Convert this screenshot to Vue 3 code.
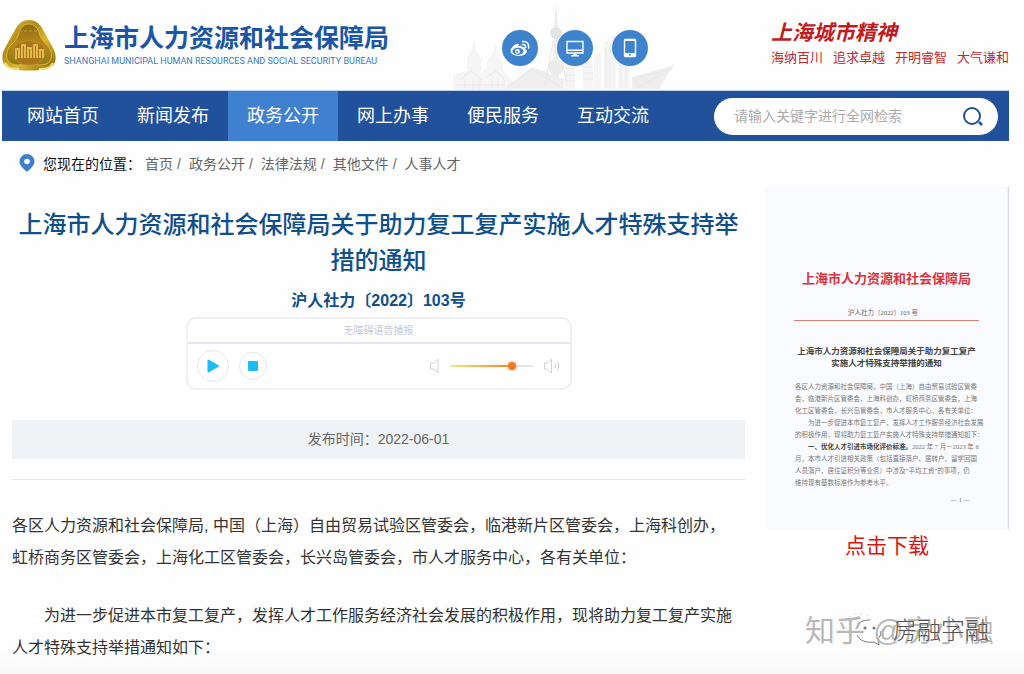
<script setup>
import { ref } from 'vue'

const navItems = ['网站首页', '新闻发布', '政务公开', '网上办事', '便民服务', '互动交流']
const active = ref('政务公开')
const crumbs = ['首页', '政务公开', '法律法规', '其他文件', '人事人才']
const slogans = ['海纳百川', '追求卓越', '开明睿智', '大气谦和']
const keyword = ref('')
const volume = ref(78)

const scanLines = [
  { x: 60, text: '各区人力资源和社会保障局，中国（上海）自由贸易试验区管委' },
  { x: 60, text: '会，临港新片区管委会，上海科创办，虹桥商务区管委会，上海' },
  { x: 60, text: '化工区管委会，长兴岛管委会，市人才服务中心，各有关单位：' },
  { x: 86, text: '为进一步促进本市复工复产，发挥人才工作服务经济社会发展' },
  { x: 60, text: '的积极作用，现将助力复工复产实施人才特殊支持举措通知如下：' },
  { x: 86, bold: '一、优化人才引进市场化评价标准。', text: '2022 年 7 月－2023 年 6' },
  { x: 60, text: '月，本市人才引进相关政策（包括直接落户、居转户、留学回国' },
  { x: 60, text: '人员落户、居住证积分等业务）中涉及“平均工资”的事项，仍' },
  { x: 60, text: '维持现有基数标准作为参考水平。' },
]
</script>

<template>
  <div class="page">
    <header class="header">
      <a class="brand" href="#">
        <svg class="emblem" viewBox="0 0 54 52" aria-hidden="true">
          <defs>
            <linearGradient id="gold" x1="0" y1="0" x2="1" y2="1">
              <stop offset="0" stop-color="#e3c343" />
              <stop offset=".35" stop-color="#b08a16" />
              <stop offset=".6" stop-color="#dcb830" />
              <stop offset="1" stop-color="#8a6105" />
            </linearGradient>
            <linearGradient id="goldIn" x1="0" y1="0" x2="0" y2="1">
              <stop offset="0" stop-color="#8d6a10" />
              <stop offset=".5" stop-color="#b8891c" />
              <stop offset="1" stop-color="#8a7a14" />
            </linearGradient>
          </defs>
          <path d="M27 1c6 0 10 3 13 8l11 20c5 10 3 19-7 21-10 2-24 2-34 0C0 48-2 39 3 29L14 9c3-5 7-8 13-8z" fill="url(#gold)" />
          <path d="M27 5c5 0 8 3 10 8 1 6 4 9 9 14 5 6 5 15-2 18-6 2-11 0-17 0s-11 2-17 0c-7-3-7-12-2-18 5-5 8-8 9-14 2-5 5-8 10-8z" fill="url(#goldIn)" stroke="#d9b93c" stroke-width="1" />
          <path d="M12 28c4-8 26-8 30 0 3 8-1 18-15 18S9 36 12 28z" fill="#a9761a" stroke="#b98f28" />
          <path d="M14 40V30h3v9M20 39V26h3v13M26 39V29h3v10M32 39V26h3v13M38 39V31h3v8" fill="none" stroke="#dfb94c" stroke-width="2" />
          <path d="M17 12h20" stroke="#b18b24" stroke-width="2" stroke-dasharray="3 2" />
          <path d="M3 44c3 6 8 6 14 6M51 44c-3 6-8 6-14 6" fill="none" stroke="#f2e07c" stroke-width="2" />
        </svg>
        <span class="brand-text">
          <strong>上海市人力资源和社会保障局</strong>
          <small>SHANGHAI MUNICIPAL HUMAN RESOURCES AND SOCIAL SECURITY BUREAU</small>
        </span>
      </a>

      <div class="channels">
        <svg class="skyline" viewBox="0 0 230 88" aria-hidden="true">
          <g fill="#f5f5f6">
            <path d="M0 88V74l14-4V57l5-8 2-10 2 10 5 9v14l6-4V60l6-7 2-12 2 12 6 9v8l10 10v18z" />
            <path d="M51 88l28-22 32 12v10z" fill="#efeff0" />
            <path d="M101 30l1-15 1-14 1 14 1 15 1 48h-6z" fill="#ededee" />
            <path d="M112 88V56h10v32zM130 88V60h10v28zM141 88V52h7v36z" />
            <path d="M151 88V42l12-8v54zM165 88V52h12v36z" />
            <path d="M179 76l42-12-15 24h-27z" fill="#eeeeef" />
          </g>
          <circle cx="103" cy="32" r="6" fill="#e4e5e7" />
          <circle cx="103" cy="66" r="8" fill="#ececed" />
          <g fill="none" stroke="#e8e9ea" stroke-width="1">
            <path d="M4 84h46M8 78l10-8 10 8v8M34 76l9-6 8 8v8M12 88V78M20 88V78M26 88V78M39 88V78M45 88V78M100 40l-8 46M106 40l8 46" />
            <path d="M54 86l25-18 28 18M112 62h10M112 68h10M112 74h10M112 80h10M130 66h10M130 72h10M130 78h10M153 46v40M157 44v42M168 56v30M173 56v30M181 78l38-10-34 18z" />
          </g>
        </svg>
        <nav class="channel-links" aria-label="官方渠道">
          <a href="#" aria-label="微博">
            <svg viewBox="0 0 36 36">
              <path d="M16 16.200c2-1 4-.7 3.800 1.100 2-.8 4 .1 3.400 2 1.800.5 2.100 2 1.200 3.400-1.400 2.200-4.700 3.200-8 3.200-4.200 0-7.800-2-7.800-4.900 0-3 4.400-7.500 7.300-7.200 1.200.200 1.300 1.200.1 2.400z" fill="#fff" />
              <ellipse cx="16" cy="21.300" rx="5.500" ry="3.600" fill="#3f83cf" />
              <circle cx="15.500" cy="21.500" r="2.400" fill="#fff" />
              <circle cx="15" cy="21.700" r="1" fill="#3f83cf" />
              <path d="M20.500 14.500c2.300-.3 3.500.9 3.100 3M20.600 11.500c4.300-.5 6.700 2.300 6 6.400" fill="none" stroke="#fff" stroke-width="1.500" stroke-linecap="round" />
            </svg>
          </a>
          <a href="#" aria-label="电脑版">
            <svg viewBox="0 0 36 36">
              <path d="M10 11.500h16v11.500H10z" fill="none" stroke="#fff" stroke-width="1.400" />
              <path d="M10 19.500h16v1.500H10zM16.500 23.500h3v2h-3zM14 25h8v1.500h-8z" fill="#fff" />
            </svg>
          </a>
          <a href="#" aria-label="手机版">
            <svg viewBox="0 0 36 36">
              <rect x="12.500" y="9.500" width="11" height="17" rx="1" fill="none" stroke="#fff" stroke-width="1.400" />
              <path d="M12.500 23h11v3.500h-11zM12.500 9.500h11V11h-11z" fill="#fff" />
              <circle cx="18" cy="24.800" r="1" fill="#3f83cf" />
            </svg>
          </a>
        </nav>
      </div>

      <div class="spirit">
        <strong>上海城市精神</strong>
        <p><span v-for="s in slogans" :key="s">{{ s }}</span></p>
      </div>
    </header>

    <div class="navbar">
      <nav class="menu">
        <a v-for="item in navItems" :key="item" href="#" :class="{ active: item === active }" @click.prevent="active = item">{{ item }}</a>
      </nav>
      <form class="search" @submit.prevent>
        <input v-model="keyword" type="text" placeholder="请输入关键字进行全网检索" aria-label="请输入关键字进行全网检索" />
        <button type="submit" aria-label="检索">
          <svg viewBox="0 0 22 22">
            <circle cx="10" cy="11" r="8" fill="none" stroke="#20519a" stroke-width="2" />
            <path d="M17 17l3 3" stroke="#20519a" stroke-width="2.500" />
          </svg>
        </button>
      </form>
    </div>

    <nav class="crumbs" aria-label="您现在的位置">
      <svg class="pin" viewBox="0 0 16 18" aria-hidden="true">
        <path d="M8 0a7.500 7.500 0 0 1 7.500 7.500C15.500 11.500 11 15 8 18 5 15 .5 11.500.5 7.500A7.500 7.500 0 0 1 8 0z" fill="#3f80cd" />
        <circle cx="8" cy="7.500" r="2.800" fill="#fff" />
      </svg>
      <b>您现在的位置：</b>
      <span v-for="(c, i) in crumbs" :key="c" class="crumb"><a href="#">{{ c }}</a><i v-if="i < crumbs.length - 1">/</i></span>
    </nav>

    <div class="content">
      <main class="article">
        <h1>上海市人力资源和社会保障局关于助力复工复产实施人才特殊支持举措的通知</h1>
        <h2>沪人社力〔2022〕103号</h2>

        <section class="player" aria-label="无障碍语音播报">
          <div class="player-title">无障碍语音播报</div>
          <div class="controls">
            <button class="play" type="button" aria-label="播放">
              <svg viewBox="0 0 12 14"><path d="M1.500 1.500v11L11 7z" fill="#1dbcf8" stroke="#1dbcf8" stroke-width="2" stroke-linejoin="round" /></svg>
            </button>
            <button class="stop" type="button" aria-label="停止">
              <svg viewBox="0 0 12 12"><rect x="1" y="1" width="10" height="10" rx="1" fill="#1dbcf8" /></svg>
            </button>
            <div class="volume">
              <svg class="low" viewBox="0 0 12 16" aria-hidden="true"><path d="M1.500 5h3.500l4-4v14l-4-4H1.500z" /></svg>
              <input v-model="volume" type="range" min="0" max="100" aria-label="音量" />
              <svg class="high" viewBox="0 0 18 16" aria-hidden="true"><path d="M1.500 5h3l4-4v14l-4-4h-3zM11.500 5.500q2 2.500 0 5M14 3.500q3.500 4.500 0 9" /></svg>
            </div>
          </div>
        </section>

        <div class="published">发布时间：2022-06-01</div>
        <hr />
        <div class="body-text">
          <p>各区人力资源和社会保障局, 中国（上海）自由贸易试验区管委会，临港新片区管委会，上海科创办，<br />虹桥商务区管委会，上海化工区管委会，长兴岛管委会，市人才服务中心，各有关单位：</p>
          <p class="indent">为进一步促进本市复工复产，发挥人才工作服务经济社会发展的积极作用，现将助力复工复产实施人才特殊支持举措通知如下：</p>
        </div>
      </main>

      <aside class="side">
        <svg class="scan" viewBox="0 0 488 684" role="img" aria-label="通知文件首页">
          <rect width="488" height="684" fill="#fafbfe" />
          <path d="M487 0v684" stroke="#d5d9e0" stroke-width="3" />
          <text class="red-head" x="243" y="191" text-anchor="middle">上海市人力资源和社会保障局</text>
          <text class="number" x="236" y="256" text-anchor="middle">沪人社力〔2022〕103 号</text>
          <path d="M58 267h370" stroke="#d98378" stroke-width="2" />
          <text class="subject" x="243" y="334" text-anchor="middle">上海市人力资源和社会保障局关于助力复工复产</text>
          <text class="subject" x="243" y="358" text-anchor="middle">实施人才特殊支持举措的通知</text>
          <text v-for="(line, i) in scanLines" :key="i" class="line" :x="line.x" :y="404 + i * 24"><tspan v-if="line.bold" class="bold">{{ line.bold }}</tspan>{{ line.text }}</text>
          <text class="line" x="371" y="630">— 1 —</text>
        </svg>
        <a class="download" href="#">点击下载</a>
        <div class="marks">
          <svg class="chat" viewBox="0 0 42 36" aria-hidden="true">
            <path d="M4 18C-1 8 10 1 20 3c4 1 7 3 8 6" fill="none" stroke="#e2e2e2" stroke-dasharray="3 3" />
            <path d="M14 15c3-5 8-6 13-6M14 24c3 6 9 8 17 7l5 3-1-6c2-2 3-5 3-8" fill="none" stroke="#777" />
            <circle cx="22" cy="17" r="1.500" fill="#777" /><circle cx="31" cy="17" r="1.500" fill="#777" />
          </svg>
          <span class="zhihu">知乎 @房小融</span>
          <span class="account">房融字融</span>
        </div>
      </aside>
    </div>
  </div>
</template>

<style>
body { background: #fefefe; }
</style>

<style scoped>
.page {
  box-sizing: border-box;
  min-height: 100vh;
  padding: 0 15px 10px 2px;
  background: linear-gradient(to top, #f8f8f8, #fefefe 24px);
  font-family: "Liberation Sans", "Noto Sans CJK SC", sans-serif;
  color: #333;
}
a { color: inherit; text-decoration: none; }
button { padding: 0; border: 0; background: none; cursor: pointer; }
svg { display: block; }

.header { display: flex; align-items: center; height: 90px; border-bottom: 1px solid #bcd3f0; }
.brand { display: flex; align-items: center; gap: 8px; color: #1b56a5; }
.emblem { width: 54px; height: 52px; }
.brand-text { display: flex; flex-direction: column; white-space: nowrap; }
.brand-text strong { font-size: 25px; line-height: 32px; font-weight: 700; }
.brand-text small { font-family: Roboto, "Liberation Sans", sans-serif; font-size: 9px; line-height: 14px; color: #3c78bd; }
.channels { position: relative; height: 90px; width: 230px; margin-left: 64px; }
.skyline { position: absolute; inset: 0; width: 230px; height: 90px; }
.channel-links { position: relative; display: flex; gap: 19px; padding: 30px 0 0 49px; }
.channel-links a { width: 36px; height: 36px; border-radius: 50%; background: #3f83cf; }
.spirit { margin-left: auto; color: #bd2b2e; }
.spirit strong { display: block; font-size: 21px; line-height: 26px; font-style: italic; font-weight: 700; color: #c01c1e; }
.spirit p { display: flex; gap: 10px; margin: 0; font-size: 13px; line-height: 24px; }

.navbar { display: flex; align-items: center; height: 50px; padding: 0 11px 0 6px; background: #20519a; }
.menu { display: flex; }
.menu a { width: 110px; line-height: 50px; font-size: 18px; text-align: center; color: #fff; }
.menu a.active { background: #3f81cf; }
.search { display: flex; align-items: center; box-sizing: border-box; width: 284px; height: 37px; margin-left: auto; padding: 0 14px 0 20px; border-radius: 19px; background: #fff; }
.search input { flex: 1; min-width: 0; padding: 0; border: 0; outline: 0; background: none; font: inherit; font-size: 14px; }
.search input::placeholder { color: #aaa; opacity: 1; }
.search button svg { width: 22px; height: 22px; }

.crumbs { display: flex; align-items: center; height: 44px; padding: 0 0 2px 17px; font-size: 14px; color: #666; }
.pin { width: 16px; height: 18px; margin-right: 8px; }
.crumbs b { margin-right: 4px; font-weight: 400; color: #111; }
.crumb { margin-right: 8px; }
.crumb i { margin-left: 4px; font-style: normal; }

.content { display: flex; gap: 20px; padding-left: 10px; }
.article { flex: 1; min-width: 0; padding-top: 20px; }
h1 { margin: 0; font-size: 24px; line-height: 36px; font-weight: 500; text-align: center; color: #0e4f8c; }
h2 { margin: 10px 0 0; font-size: 16px; line-height: 24px; font-weight: 700; text-align: center; color: #0e4f8c; }
.player { box-sizing: border-box; width: 386px; margin: 4px auto 0; border: 2px solid #f0f0f2; border-radius: 10px; background: #fff; }
.player-title { border-bottom: 2px solid #e3e6f0; font-family: "Liberation Serif", "Noto Sans CJK SC", serif; font-size: 10px; line-height: 23px; text-align: center; color: #c5c8d8; }
.controls { display: flex; align-items: center; gap: 10px; height: 44px; padding: 0 9px; }
.controls button { display: flex; align-items: center; justify-content: center; box-sizing: border-box; border: 1px solid #e4e6ed; border-radius: 50%; }
.play { width: 32px; height: 32px; }
.play svg { width: 12px; height: 14px; }
.stop { width: 28px; height: 28px; }
.stop svg { width: 12px; height: 12px; }
.volume { display: flex; align-items: center; gap: 10px; margin-left: auto; }
.volume svg { fill: none; stroke: #cfcfd4; stroke-width: 1; }
.low { width: 12px; height: 16px; }
.high { width: 18px; height: 16px; }
.volume input { appearance: none; width: 82px; height: 12px; margin: 0; background: linear-gradient(to right, #fde27a, #f58220 76%, #e4e4ec 76%) center / 100% 2px no-repeat; }
.volume input::-webkit-slider-thumb { appearance: none; width: 8px; height: 8px; border-radius: 50%; background: #f57c1c; box-shadow: 0 0 3px #f9a765; }
.published { margin-top: 30px; background: #eff3f6; font-size: 14px; line-height: 39px; text-align: center; color: #666; }
hr { margin: 20px 0 0; border: 0; border-top: 1px solid #e8e8e8; }
.body-text { padding-top: 30px; font-size: 16px; line-height: 32px; }
.body-text p { margin: 0 0 26px; }
.body-text p:last-child { margin: 0; }
.indent { text-indent: 2em; }

.side { width: 244px; flex: none; }
.scan { width: 100%; height: auto; font-family: "Liberation Serif", "Noto Sans CJK SC", serif; }
.red-head { font-size: 26px; font-weight: 700; fill: #d9343e; }
.number { font-size: 13px; fill: #666; }
.subject { font-size: 17px; font-weight: 700; fill: #444; }
.line { font-size: 13px; fill: #777; }
.bold { font-weight: 700; fill: #444; }
.download { display: block; font-size: 21px; line-height: 34px; text-align: center; color: #d8150f; }
.marks { position: relative; height: 40px; margin: 48px 0 0 40px; white-space: nowrap; }
.chat { position: absolute; left: 38px; top: 0; width: 42px; height: 36px; }
.account { position: absolute; left: 88px; top: 2px; font-size: 24px; line-height: 36px; font-weight: 300; color: #555; }
.zhihu { position: absolute; left: 0; top: 2px; font-size: 30px; line-height: 36px; color: #b8b8b8; }
</style>
